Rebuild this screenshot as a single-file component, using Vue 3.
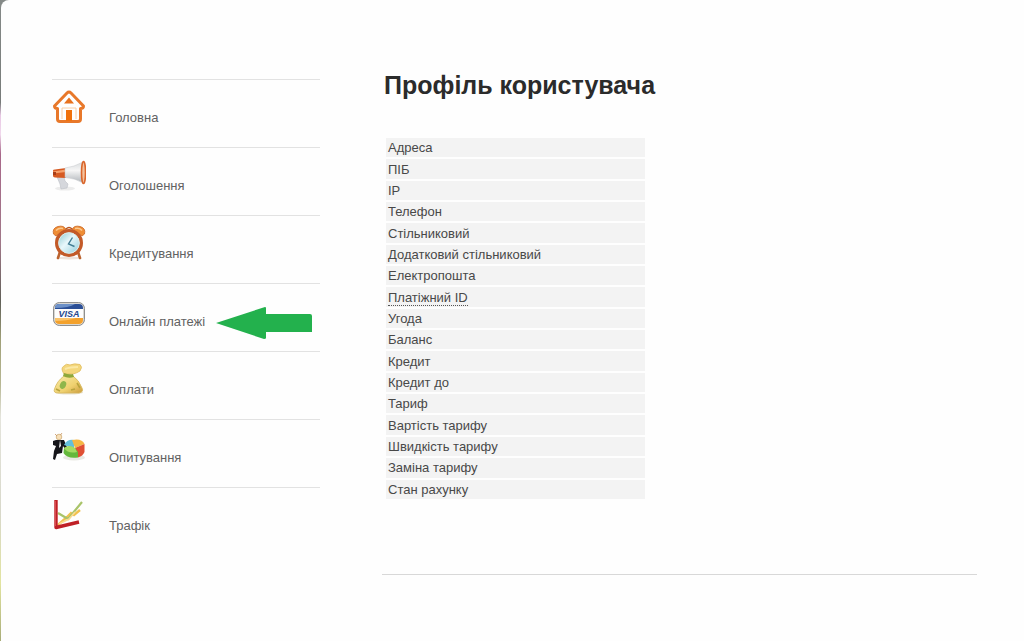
<script setup>
const menu = [
  { id: 'home', label: 'Головна' },
  { id: 'news', label: 'Оголошення' },
  { id: 'credit', label: 'Кредитування' },
  { id: 'visa', label: 'Онлайн платежі' },
  { id: 'payments', label: 'Оплати' },
  { id: 'polls', label: 'Опитування' },
  { id: 'traffic', label: 'Трафік' }
]
const fields = [
  'Адреса', 'ПІБ', 'IP', 'Телефон', 'Стільниковий', 'Додатковий стільниковий',
  'Електропошта', 'Платіжний ID', 'Угода', 'Баланс', 'Кредит', 'Кредит до',
  'Тариф', 'Вартість тарифу', 'Швидкість тарифу', 'Заміна тарифу', 'Стан рахунку'
]
</script>

<template>
  <div class="backdrop">
    <div class="page">
      <nav class="sidebar">
        <ul class="menu">
          <li v-for="item in menu" :key="item.id" class="item">
            <a href="#" class="link">
              <svg v-if="item.id === 'home'" class="icon" viewBox="0 0 34 36" aria-hidden="true">
                <path d="M2.500 17 L15 4 Q17 2 19 4 L31.500 17 Q31.500 19.500 28.500 19.500 V30 Q28.500 32.500 26 32.500 H8 Q5.500 32.500 5.500 30 V19.500 Q2.500 19.500 2.500 17 Z" fill="#fff" stroke="#e8782a" stroke-width="3" stroke-linejoin="round" />
                <path d="M17 8.500 L22 14.500 H12 Z" fill="#e8721f" />
                <path d="M10 30 V19 H24 V30" fill="none" stroke="#f8cfa8" stroke-width="1" />
                <rect x="14" y="21" width="6" height="11" fill="#f0710c" />
              </svg>

              <svg v-else-if="item.id === 'news'" class="icon" viewBox="0 0 34 36" aria-hidden="true">
                <defs>
                  <linearGradient id="horn" x1="0" y1="0" x2="0" y2="1">
                    <stop offset="0" stop-color="#d9dcde" /><stop offset="0.400" stop-color="#f6f6f6" /><stop offset="1" stop-color="#aeb3b8" />
                  </linearGradient>
                </defs>
                <ellipse cx="13" cy="31.500" rx="10" ry="2" fill="#ececec" />
                <path d="M5 20 L12 20 L13 24 L16 27 L15 31 L9 32 L8 27 Z" fill="#d5d7dc" stroke="#bcc0c6" stroke-width="0.600" />
                <path d="M1 13.500 Q1 12.500 3 12.500 L14 11 V21 L3 20.500 Q1 20 1 19 Z" fill="#d65a22" />
                <path d="M1 14.500 L14 12.500 V15 L1 16.500 Z" fill="#f6a16c" />
                <path d="M13 11 Q22 10 31 5 V26 Q23 21 13 20.500 Z" fill="url(#horn)" stroke="#c2c5c9" stroke-width="0.500" />
                <ellipse cx="31.500" cy="15.500" rx="2" ry="11" fill="#f5c29c" stroke="#d9652b" stroke-width="1.600" />
                <rect x="1" y="15" width="3" height="3" fill="#a83d18" />
              </svg>

              <svg v-else-if="item.id === 'credit'" class="icon" viewBox="0 0 34 36" aria-hidden="true">
                <defs>
                  <linearGradient id="dial" x1="0" y1="0" x2="1" y2="1">
                    <stop offset="0" stop-color="#79bfc9" /><stop offset="0.450" stop-color="#e9f8fb" /><stop offset="1" stop-color="#83c5d3" />
                  </linearGradient>
                </defs>
                <ellipse cx="17" cy="33" rx="12" ry="1.500" fill="#eee3dc" />
                <path d="M8 27 L6 33 M26 27 L28 33" stroke="#bb6430" stroke-width="2.600" stroke-linecap="round" />
                <path d="M1.500 9 Q0 3 6 1.500 Q12 0 14 4.500 L4 11 Z" fill="#ef8d35" stroke="#c96420" stroke-width="0.800" />
                <path d="M32.500 9 Q34 3 28 1.500 Q22 0 20 4.500 L30 11 Z" fill="#ef8d35" stroke="#c96420" stroke-width="0.800" />
                <path d="M4 5.500 Q7 2.500 11 3.500 M23 3.500 Q28 2.500 30 5.500" stroke="#fbc88e" stroke-width="1.600" fill="none" />
                <path d="M14 4 Q17 1 20 4" stroke="#b9541e" stroke-width="1.500" fill="none" />
                <circle cx="17" cy="18" r="12.300" fill="url(#dial)" stroke="#c35a28" stroke-width="3.400" />
                <circle cx="17" cy="18" r="10.300" fill="none" stroke="#dcebea" stroke-width="1" />
                <path d="M20.500 12.500 L16.500 19 L22.500 21.500" fill="none" stroke="#427d94" stroke-width="1.400" />
              </svg>

              <svg v-else-if="item.id === 'visa'" class="icon" viewBox="0 0 34 36" aria-hidden="true">
                <defs>
                  <clipPath id="card"><rect x="3" y="11" width="28" height="20" rx="4" /></clipPath>
                </defs>
                <rect x="1.500" y="9.500" width="31" height="23" rx="6" fill="#b9b6ae" stroke="#8f8f8e" stroke-width="1" />
                <rect x="2.500" y="10.500" width="29" height="21" rx="4.500" fill="#f5f5f5" />
                <g clip-path="url(#card)">
                  <rect x="3" y="11" width="28" height="6" fill="#2b4f96" />
                  <path d="M3 11 H23 Q17 15 3 15 Z" fill="#6d91c8" />
                  <rect x="3" y="16" width="28" height="10" fill="#fdfdfd" />
                  <rect x="3" y="25" width="28" height="6" fill="#f3a12c" />
                  <path d="M3 25 H24 Q15 28 3 28 Z" fill="#fac36a" />
                </g>
                <text x="17" y="24" class="visa" text-anchor="middle">VISA</text>
              </svg>

              <svg v-else-if="item.id === 'payments'" class="icon" viewBox="0 0 34 36" aria-hidden="true">
                <defs>
                  <linearGradient id="bag" x1="0" y1="0" x2="1" y2="1">
                    <stop offset="0" stop-color="#f8ecab" /><stop offset="0.600" stop-color="#efd16f" /><stop offset="1" stop-color="#c99a3c" />
                  </linearGradient>
                </defs>
                <ellipse cx="17" cy="31.500" rx="14" ry="2" fill="#e9e3d3" />
                <path d="M12 15 Q5 20 2.500 28 Q1 32 6 32 H27 Q32 31 30 27 Q27 19 21 15 Z" fill="url(#bag)" stroke="#d6b65c" stroke-width="0.800" />
                <path d="M12 13 Q8 7 12 5 Q14 2 18 4 Q22 2 28 3.500 Q31 6 28 10 Q25 12 21 13 Z" fill="#f4d77c" stroke="#dfbb5e" stroke-width="0.800" />
                <path d="M13 8 Q18 6 26 6" stroke="#fbe8a4" stroke-width="2" fill="none" />
                <path d="M12 12 Q17 14 21 13 L22 16 Q16 18 11 15 Z" fill="#8fa83a" />
                <ellipse cx="11" cy="24" rx="3" ry="4" fill="#8fb64b" transform="rotate(25 11 24)" />
                <path d="M4 28 L8 30 M25 22 L28 27 M19 29 L23 28" stroke="#b9a43e" stroke-width="1.600" />
              </svg>

              <svg v-else-if="item.id === 'polls'" class="icon" viewBox="0 0 34 36" aria-hidden="true">
                <ellipse cx="22" cy="28.500" rx="11" ry="3" fill="#e9e9e3" />
                <circle cx="7" cy="8" r="2.800" fill="#f7dfb8" stroke="#c9a56b" stroke-width="0.700" />
                <path d="M3 5 L5 7 M10 4 L8.500 6" stroke="#c78f5b" stroke-width="0.800" />
                <path d="M4 11 L12 11 L15 18 L13 20 L11 17 L10 24 L5 25 L3 31 L1 30 L2 22 L4 17 L1 16 L1 12 Z" fill="#15151a" />
                <path d="M8 11 L9 17 L7 19 Z" fill="#fff" />
                <path d="M12 16 Q15 10 22 11 L22 19 Z" fill="#64bfdc" />
                <path d="M20 11 Q30 9 32.500 15 L23 19 Z" fill="#f5b744" />
                <path d="M32.500 15 V23 Q31 27 26 28.500 L23 19 Z" fill="#df5034" />
                <path d="M12 19 Q17 16 23 19 L26 23 V28.500 Q15 30 11.500 24 Z" fill="#64b83b" />
                <path d="M12 19 Q17 15 23 19 L25 23 Q16 25 12 19 Z" fill="#a4db62" />
              </svg>

              <svg v-else class="icon" viewBox="0 0 34 36" aria-hidden="true">
                <path d="M6 28 L15 20 L19 16 L22 18 L28 13" stroke="#f2c14e" stroke-width="2.400" fill="none" />
                <path d="M6 16 L16 22 L30 5" stroke="#a9c46a" stroke-width="2.200" fill="none" />
                <path d="M7 27 L17 22 L23 15" stroke="#f9dc92" stroke-width="1.600" fill="none" />
                <path d="M4 3 V30.500 L27 25" stroke="#bf2026" stroke-width="3.400" fill="none" stroke-linejoin="round" />
                <path d="M3.500 4 V29" stroke="#e0575a" stroke-width="0.800" />
              </svg>
              <span class="label">{{ item.label }}</span>
              <svg v-if="item.id === 'visa'" class="arrow" viewBox="0 0 98 34" aria-hidden="true">
                <path d="M1 17 L50 1 Q51 1 51 2 V8 H95 Q97 8 97 10 V26 H51 V32 Q51 33 49 33 Z" fill="#23b14d" />
              </svg>
            </a>
          </li>
        </ul>
      </nav>

      <main class="content">
        <h1 class="title">Профіль користувача</h1>
        <table class="profile">
          <tbody>
            <tr v-for="field in fields" :key="field">
              <th scope="row">
                <abbr v-if="field === 'Платіжний ID'">{{ field }}</abbr>
                <template v-else>{{ field }}</template>
              </th>
            </tr>
          </tbody>
        </table>
        <hr class="rule" />
      </main>
    </div>
  </div>
</template>

<style>
body {
  margin: 0;
}
</style>

<style scoped>
.backdrop {
  min-height: 100vh;
  display: flex;
  background: linear-gradient(#858a88 0%, #777b79 16%, #e8c8e4 18%, #f0d8ec 21%, #a8688a 24%, #a07888 38%, #606058 47%, #a0a078 53%, #b8b894 60%, #e4e4dc 65%, #d8d8ca 80%, #e2e4a0 91%, #a8ac78 100%);
  font-family: "Liberation Sans", Arial, sans-serif;
}
.page {
  flex: 1;
  display: grid;
  grid-template-columns: 268px minmax(0, 1fr);
  column-gap: 62px;
  align-items: start;
  box-sizing: border-box;
  margin-left: 1px;
  padding: 0 47px 0 51px;
  border-top-left-radius: 8px;
  background: #fefefe;
}
.sidebar {
  padding-top: 79px;
}
.menu {
  margin: 0;
  padding: 0;
  list-style: none;
}
.item {
  height: 68px;
  box-sizing: border-box;
  border-top: 1px solid #e2e2e2;
}
.link {
  display: flex;
  align-items: flex-start;
  padding-top: 9px;
  color: #626262;
  font-size: 13px;
  line-height: 18px;
  text-decoration: none;
}
.icon {
  flex: none;
  width: 34px;
  height: 36px;
}
.label {
  margin: 20px 10px 0 23px;
}
.arrow {
  width: 98px;
  height: 34px;
  margin-top: 13px;
}
.visa {
  font: italic bold 9px "Liberation Sans", Arial, sans-serif;
  fill: #25498f;
}
.content {
  padding-top: 68px;
}
.title {
  margin: 0 0 34px 2px;
  color: #2b2b2b;
  font-size: 25px;
  line-height: 34px;
}
.profile {
  width: 263px;
  height: 365px;
  margin-left: 2px;
  border-spacing: 2px;
}
.profile th {
  padding: 0 2px;
  background: #f3f3f3;
  color: #484848;
  font-size: 13px;
  font-weight: 400;
  line-height: 19px;
  text-align: left;
}
.profile abbr {
  border-bottom: 1px dotted #555;
  text-decoration: none;
}
.rule {
  height: 1px;
  margin: 73px 0 0;
  border: 0;
  background: #d8d8d8;
}
</style>
